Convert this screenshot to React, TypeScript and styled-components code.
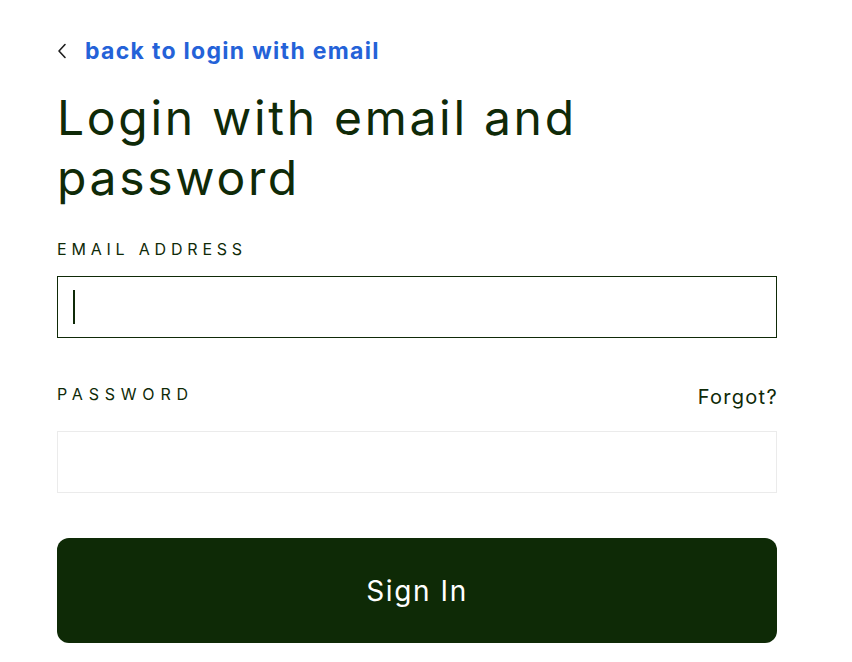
import React from "react";
import styled, { createGlobalStyle } from "styled-components";

const Global = createGlobalStyle`
  html, body { margin: 0; padding: 0; background: #ffffff; }
  body { font-family: Inter, "Noto Sans", sans-serif; color: #0f2a08; }
  * { box-sizing: border-box; }
`;

const Page = styled.main`
  width: 852px;
  padding: 36px 75px 0 57px;
  display: flex;
  flex-direction: column;
`;

const BackLink = styled.a`
  display: flex;
  align-items: center;
  gap: 17px;
  height: 30px;
  color: #2462d8;
  font-weight: 700;
  font-size: 23px;
  letter-spacing: 1.3px;
  text-decoration: none;
  cursor: pointer;
`;

const Heading = styled.h1`
  margin: 22px 0 0;
  font-weight: 400;
  font-size: 48px;
  line-height: 60px;
  letter-spacing: 2.7px;
  color: #0f2a08;
  width: 600px;
`;

const Label = styled.label<{ $spacing?: number }>`
  display: block;
  font-size: 16px;
  letter-spacing: ${(p) => p.$spacing ?? 4.8}px;
  text-transform: uppercase;
  color: #0f2a08;
  line-height: 20px;
`;

const LabelRow = styled.div<{ $top: number }>`
  display: flex;
  justify-content: space-between;
  align-items: flex-end;
  margin-top: ${(p) => p.$top}px;
`;

const ForgotLink = styled.a`
  font-size: 20px;
  letter-spacing: 1.3px;
  margin-right: -1px;
  color: #0f2a08;
  text-decoration: none;
  line-height: 24px;
  margin-bottom: -5px;
  cursor: pointer;
`;

const Field = styled.div<{ $focused?: boolean; $top: number }>`
  margin-top: ${(p) => p.$top}px;
  height: 62px;
  border: 1px solid ${(p) => (p.$focused ? "#0f2a08" : "#ebebeb")};
  display: flex;
  align-items: center;
  padding: 0 15px;
`;

const Caret = styled.span`
  width: 2px;
  height: 34px;
  background: #0f2a08;
  flex: none;
`;

const Input = styled.input`
  flex: 1;
  border: none;
  outline: none;
  background: transparent;
  font-family: inherit;
  font-size: 18px;
  color: #0f2a08;
  caret-color: transparent;
  padding: 0;
  height: 100%;
`;

const SubmitButton = styled.button`
  margin-top: 45px;
  height: 105px;
  border: none;
  border-radius: 12px;
  background: #0e2a06;
  color: #ffffff;
  font-family: inherit;
  font-size: 28px;
  letter-spacing: 1.6px;
  cursor: pointer;
`;

function Chevron() {
  return (
    <svg width="11" height="16" viewBox="0 0 11 16" fill="none">
      <path d="M8 1.5 L2 8 L8 14.5" stroke="#1d1d1d" strokeWidth="1.6" strokeLinecap="round" strokeLinejoin="round" />
    </svg>
  );
}

export default function App() {
  return (
    <>
      <Global />
      <Page>
        <BackLink>
          <Chevron />
          back to login with email
        </BackLink>
        <Heading>Login with email and password</Heading>
        <LabelRow $top={31}>
          <Label htmlFor="email">Email Address</Label>
        </LabelRow>
        <Field $focused $top={17}>
          <Caret />
          <Input id="email" type="email" />
        </Field>
        <LabelRow $top={46}>
          <Label htmlFor="password" $spacing={5.8}>Password</Label>
          <ForgotLink>Forgot?</ForgotLink>
        </LabelRow>
        <Field $top={27}>
          <Input id="password" type="password" />
        </Field>
        <SubmitButton>Sign In</SubmitButton>
      </Page>
    </>
  );
}
